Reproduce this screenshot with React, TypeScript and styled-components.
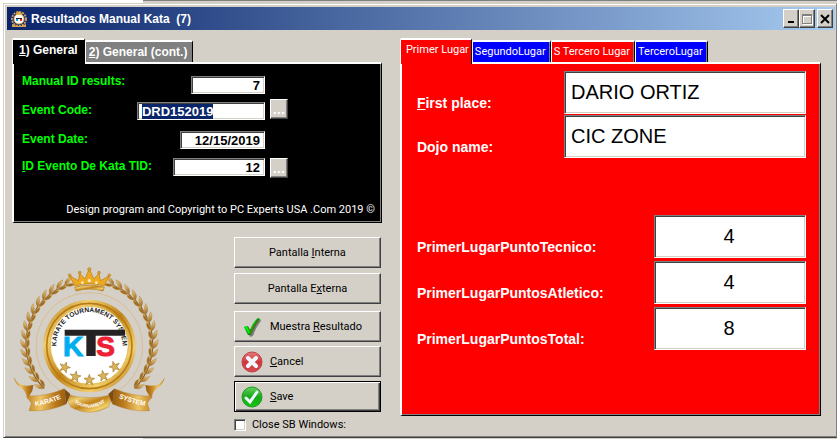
import React, { useEffect, useRef } from "react";
import styled, { createGlobalStyle, css } from "styled-components";

const FACE = "#d4d0c8";
const BOLD_FONT = `"Liberation Sans", Arial, sans-serif`;

const GlobalStyle = createGlobalStyle`
  *, *::before, *::after { box-sizing: border-box; }
  body {
    margin: 0;
    background: ${FACE};
    font-family: Roboto, "Liberation Sans", Arial, sans-serif;
    font-size: 11px;
    line-height: 14px;
    color: #000;
  }
  button, input { font: inherit; color: inherit; margin: 0; border-radius: 0; }
`;

const raised = css`
  border: 1px solid;
  border-color: #fff #404040 #404040 #fff;
  box-shadow: inset -1px -1px 0 #808080;
`;

const Desktop = styled.div`
  min-height: 100vh;
  display: flex;
  padding: 3px 0 1px 3px;
  background:
    linear-gradient(#fff, #fff) 0 0 / 143px 100% no-repeat,
    linear-gradient(#808080, #808080) 143px 0 / 100% 1px no-repeat,
    ${FACE};
`;

const Window = styled.main`
  flex: 1;
  min-width: 0;
  display: flex;
  flex-direction: column;
  padding: 2px 1px 1px 2px;
  background: ${FACE};
  border: 1px solid;
  border-color: ${FACE} #808080 #404040 ${FACE};
  box-shadow: inset 1px 1px 0 #fff, inset 0 -1px 0 #808080;
`;

const TitleBar = styled.header`
  display: flex;
  align-items: center;
  height: 23px;
  margin: 1px 0 0 1px;
  padding: 0 2px 0 4px;
  background: linear-gradient(to right, #0a246a, #a6caf0);
`;

const Title = styled.h1`
  flex: 1;
  margin: 0 0 0 4px;
  font-family: ${BOLD_FONT};
  font-size: 12px;
  font-weight: bold;
  color: #fff;
  white-space: pre;
`;

const CaptionButtons = styled.div`
  display: flex;
`;

const CaptionButton = styled.button<{ $apart?: boolean }>`
  ${raised}
  width: 16px;
  height: 19px;
  padding: 0;
  display: grid;
  place-items: center;
  background: ${FACE};
  margin-left: ${(p) => (p.$apart ? "2px" : "0")};
`;

const Body = styled.div`
  flex: 1;
  display: grid;
  grid-template-columns: 369fr 420fr;
  gap: 18px;
  padding: 8px 14px 0 6px;
`;

const Column = styled.div<{ $inset?: boolean }>`
  display: flex;
  flex-direction: column;
  min-width: 0;
  padding-bottom: ${(p) => (p.$inset ? "20px" : "0")};
`;

const TabStrip = styled.div`
  display: flex;
  align-items: flex-end;
`;

const Tab = styled.button<{ $fill: string; $active?: boolean; $bold?: boolean }>`
  height: ${(p) => (p.$active ? "26px" : "22px")};
  margin-bottom: ${(p) => (p.$active ? "-2px" : "0")};
  padding: ${(p) =>
    p.$active
      ? p.$bold ? "0 6px 5px 6px" : "0 2px 5px 5px"
      : p.$bold ? "0 5px 0 3px" : "0 4px 0 2px"};
  z-index: ${(p) => (p.$active ? 1 : 0)};
  background: ${(p) => p.$fill};
  color: #fff;
  ${(p) => p.$bold && `font-family: ${BOLD_FONT}; font-size: 12px; font-weight: bold;`}
  white-space: nowrap;
  border: solid;
  border-width: 2px 1px 0 1px;
  border-color: #fff #000 #fff #fff;
  border-radius: 2px 2px 0 0;
  ${(p) => !p.$active && "box-shadow: inset -1px 0 0 #808080;"}
`;

const panel = css`
  border: solid;
  border-width: 2px 1px 1px 2px;
  border-color: #fff #000 #000 #fff;
  box-shadow: inset -1px -1px 0 #808080;
`;

const GeneralPanel = styled.section`
  ${panel}
  display: flex;
  flex-direction: column;
  height: 161px;
  padding: 9px 6px 5px 8px;
  background: #000;
`;

const FieldGrid = styled.div`
  display: grid;
  grid-template-columns: 1fr 18px;
  grid-template-rows: 26px 32px 27px 20px;
  column-gap: 5px;
  padding-right: 87px;
`;

const FieldRow = styled.div<{ $stagger?: boolean; $drop?: boolean }>`
  grid-column: 1;
  display: flex;
  justify-content: space-between;
  align-items: ${(p) => (p.$stagger ? "flex-end" : "flex-start")};
  height: ${(p) => (p.$stagger ? "21px" : "auto")};
  padding-top: ${(p) => (p.$drop ? "3px" : "0")};
`;

const FieldLabel = styled.label`
  align-self: flex-start;
  color: #0f0;
  font-family: ${BOLD_FONT};
  font-size: 12px;
  font-weight: bold;
  line-height: 16px;
  white-space: nowrap;
`;

const sunken = css`
  border: 1px solid;
  border-color: #808080 #fff #fff #808080;
  box-shadow: inset 1px 1px 0 #404040, inset -1px -1px 0 ${FACE};
  background: #fff;
  outline: none;
`;

const SmallInput = styled.input<{ $width: number; $left?: boolean }>`
  ${sunken}
  width: ${(p) => p.$width}px;
  height: 18px;
  padding: 0 4px;
  font-family: ${BOLD_FONT};
  font-size: 13px;
  font-weight: bold;
  text-align: ${(p) => (p.$left ? "left" : "right")};
  &::selection { background: #0a246a; color: #fff; }
`;

const LookupButton = styled.button`
  ${raised}
  grid-column: 2;
  width: 18px;
  height: 20px;
  padding: 0;
  background: ${FACE};
  color: #fff;
  font-size: 14px;
  font-weight: bold;
`;

const Copyright = styled.p`
  margin: auto 0 0;
  text-align: right;
  color: #fff;
  white-space: nowrap;
`;

const Lower = styled.div`
  display: flex;
  justify-content: space-between;
  align-items: flex-start;
  padding: 14px 1px 0;
`;

const EmblemBox = styled.div`
  width: 153px;
  padding-top: 28px;
  svg { display: block; width: 100%; }
`;

const Actions = styled.div`
  display: flex;
  flex-direction: column;
  gap: 4px;
  width: 147px;
`;

const ActionGroup = styled.div`
  display: flex;
  flex-direction: column;
  gap: 5px;
  margin-bottom: 3px;
`;

const ActionButton = styled.button<{ $default?: boolean }>`
  ${raised}
  ${(p) => p.$default && "border-color: #000; box-shadow: inset 1px 1px 0 #fff, inset -1px -1px 0 #404040, inset -2px -2px 0 #808080;"}
  height: 31px;
  display: flex;
  align-items: center;
  gap: 6px;
  padding: 0 0 0 6px;
  background: ${FACE};
  svg { flex: none; }
`;

const PlainAction = styled(ActionButton)`
  justify-content: center;
  padding: 0;
`;

const CloseOption = styled.label`
  display: flex;
  align-items: center;
  gap: 6px;
  margin-top: 2px;
`;

const CheckBox = styled.input`
  ${sunken}
  appearance: none;
  width: 12px;
  height: 12px;
`;

const PlacePanel = styled.section`
  ${panel}
  flex: 1;
  display: flex;
  flex-direction: column;
  padding: 7px 14px 0 15px;
  background: #f00;
`;

const PlaceRow = styled.div`
  display: flex;
  justify-content: space-between;
  align-items: center;
  margin-bottom: 1px;
`;

const ScoreGroup = styled.div`
  display: flex;
  flex-direction: column;
  gap: 2px;
  margin-top: 56px;
`;

const PlaceLabel = styled.label`
  padding-top: 20px;
  color: #fff;
  font-family: ${BOLD_FONT};
  font-size: 14px;
  font-weight: bold;
  line-height: 16px;
  white-space: nowrap;
`;

const BigInput = styled.input<{ $score?: boolean }>`
  ${sunken}
  width: ${(p) => (p.$score ? "152px" : "242px")};
  height: 43px;
  padding: ${(p) => (p.$score ? "0 8px 0 6px" : "0 6px")};
  font-family: ${BOLD_FONT};
  font-size: 20px;
  text-align: ${(p) => (p.$score ? "center" : "left")};
`;

const LEAVES = Array.from({ length: 15 }, (_, i) => i);

function Branch() {
  return (
    <g>
      <path d="M205 74 A190 190 0 0 0 135 385" fill="none" stroke="#8a5a18" strokeWidth="4" />
      {LEAVES.map((i) => {
        const deg = 112 + i * 8;
        const rad = (deg * Math.PI) / 180;
        const x = 271 + 190 * Math.cos(rad);
        const y = 250 - 190 * Math.sin(rad);
        return (
          <g key={i} transform={`translate(${x} ${y}) rotate(${90 - deg})`}>
            <path d="M-3 0 Q4 -18 26 -15 Q16 -1 -3 0Z" fill="url(#leaf)" stroke="#a0702a" strokeWidth="1" />
            <path d="M-3 1 Q10 17 27 9 Q15 -2 -3 1Z" fill="#9c6c2a" stroke="#e9c46c" strokeWidth="1" />
          </g>
        );
      })}
    </g>
  );
}

function starPoints(cx: number, cy: number, r: number, turn: number) {
  return Array.from({ length: 10 }, (_, i) => {
    const a = ((i * 36 - 90 + turn) * Math.PI) / 180;
    const d = i % 2 ? r * 0.4 : r;
    return `${cx + d * Math.cos(a)},${cy + d * Math.sin(a)}`;
  }).join(" ");
}

const STARS = [
  [197, 322, 20],
  [229, 350, 10],
  [271, 360, 0],
  [313, 348, -10],
  [347, 320, -20],
];

function RibbonSide() {
  return (
    <g>
      <path d="M45 351 Q58 385 103 375 L100 392 L85 418 Q83 394 64 382 Q47 370 45 351Z" fill="url(#band)" />
      <path d="M82 408 Q140 410 196 386 L202 432 Q145 457 90 452 L97 430Z" fill="url(#band)" stroke="#a8742a" />
      <path d="M196 386 L214 402 L202 432Z" fill="#7b4c13" />
    </g>
  );
}

function Emblem() {
  return (
    <svg viewBox="42 15 459 450" role="img" aria-label="Karate Tournament System">
      <defs>
        <linearGradient id="gold" x1="0" y1="0" x2="1" y2="1">
          <stop offset="0" stopColor="#a8700f" />
          <stop offset="0.25" stopColor="#f0cd70" />
          <stop offset="0.5" stopColor="#c1841a" />
          <stop offset="0.75" stopColor="#f3cf6a" />
          <stop offset="1" stopColor="#a0640c" />
        </linearGradient>
        <linearGradient id="leaf" x1="0" y1="0" x2="1" y2="0">
          <stop offset="0" stopColor="#9a6521" />
          <stop offset="1" stopColor="#f3d384" />
        </linearGradient>
        <linearGradient id="band" x1="0" y1="0" x2="1" y2="0">
          <stop offset="0" stopColor="#c08220" />
          <stop offset="0.35" stopColor="#edc568" />
          <stop offset="0.7" stopColor="#bf7e1e" />
          <stop offset="1" stopColor="#945b10" />
        </linearGradient>
      </defs>
      <Branch />
      <g transform="translate(542 0) scale(-1 1)"><Branch /></g>
      <circle cx="271" cy="258" r="160" fill="none" stroke="#e0b070" strokeWidth="2" />
      <g fill="url(#gold)" stroke="#b8790c" strokeWidth="2">
        <path d="M228 78 L211 47 L238 62 L242 40 L258 57 L271 26 L284 57 L300 40 L304 62 L332 47 L315 78 Q271 64 228 78Z" fill="#edaa20" />
        <path d="M227 82 Q271 69 316 82 L312 93 Q271 81 231 93Z" />
        <circle cx="212" cy="46" r="4" /><circle cx="242" cy="38" r="4" />
        <circle cx="271" cy="28" r="5" /><circle cx="300" cy="38" r="4" /><circle cx="331" cy="46" r="4" />
      </g>
      <g fill="#fff1b7"><circle cx="250" cy="68" r="4" /><circle cx="271" cy="62" r="5" /><circle cx="292" cy="68" r="4" /></g>
      <circle cx="271" cy="258" r="139" fill="url(#gold)" />
      <circle cx="271" cy="258" r="128" fill="none" stroke="#b97c14" strokeWidth="5" />
      <circle cx="271" cy="256" r="117" fill="#fff" stroke="#e6bf58" strokeWidth="3" />
      <path id="motto" d="M174 275 A99 99 0 1 1 368 275" fill="none" />
      <text fontFamily="Liberation Sans, Arial, sans-serif" fontSize="20" fontWeight="bold" fill="#222" textAnchor="middle">
        <textPath href="#motto" startOffset="50%">KARATE TOURNAMENT SYSTEM</textPath>
      </text>
      <g fontFamily="Liberation Sans, Arial, sans-serif" fontSize="84" fontWeight="bold" strokeWidth="3">
        <text x="192" y="288" fill="#00aeef" stroke="#00aeef">K</text>
        <text x="292" y="287" fill="#ed2035" stroke="#ed2035">S</text>
      </g>
      <path d="M197 209 H378 V227 H290 V288 H262 V227 H197Z" fill="#262223" />
      {STARS.map(([x, y, turn]) => (
        <polygon key={x} points={starPoints(x, y, 17, turn)} fill="#d9b35c" stroke="#a37a28" strokeWidth="2" />
      ))}
      <path d="M200 403 Q271 423 344 403 L328 441 Q271 473 215 441Z" fill="url(#gold)" stroke="#a8742a" />
      <RibbonSide />
      <g transform="translate(542 0) scale(-1 1)"><RibbonSide /></g>
      <path id="ribbonLeft" d="M101 439 Q150 434 194 412" fill="none" />
      <path id="ribbonMid" d="M222 425 Q271 461 322 424" fill="none" />
      <path id="ribbonRight" d="M350 410 Q400 432 447 439" fill="none" />
      <g fontFamily="Liberation Sans, Arial, sans-serif" fontWeight="bold" fill="#fff" textAnchor="middle" fontSize="20">
        <text><textPath href="#ribbonLeft" startOffset="50%">KARATE</textPath></text>
        <text fontSize="14"><textPath href="#ribbonMid" startOffset="50%">TOURNAMENT</textPath></text>
        <text><textPath href="#ribbonRight" startOffset="50%">SYSTEM</textPath></text>
      </g>
    </svg>
  );
}

function AppIcon() {
  return (
    <svg width="16" height="16" viewBox="0 0 16 16" aria-hidden="true">
      <circle cx="8" cy="8" r="7" fill="none" stroke="#c5985c" strokeWidth="2" strokeDasharray="2 1" />
      <circle cx="8" cy="8" r="5" fill="#fff" stroke="#d8ad63" />
      <path d="M5 1 L6 3 L8 0 L10 3 L11 1 L11 4 H5Z" fill="#f0b43c" />
      <path d="M5 7 H11 V8 H5Z" fill="#222" />
      <path d="M5 8 H7 V10 H5Z" fill="#00aeef" />
      <path d="M9 8 H11 V10 H9Z" fill="#ed2035" />
      <path d="M1 13 Q8 17 15 13 V16 H1Z" fill="#d9a54a" />
    </svg>
  );
}

function TickIcon() {
  return (
    <svg width="23" height="23" viewBox="0 0 23 23" aria-hidden="true">
      <path d="M5 14 L8 13 L10 17 Q13 9 19 4 L20 6 Q15 12 12 21 L9 22Z" fill="#808080" />
      <path d="M3 12 L7 11 L9 15 Q12 7 17 3 L19 4 Q14 11 10 20 L7 20Z" fill="#0b8a12" />
      <path d="M3 12 L6 11 L9 17 Q12 7 17 3 Q12 10 8 19Z" fill="#00f000" />
      <path d="M9 19 Q12 11 18 5" fill="none" stroke="#986018" strokeWidth="1" />
    </svg>
  );
}

function RoundIcon({ kind }: { kind: "cancel" | "save" }) {
  const cancel = kind === "cancel";
  return (
    <svg width="23" height="23" viewBox="0 0 23 23" aria-hidden="true">
      <defs>
        <linearGradient id={kind} x1="0" y1="0" x2="0" y2="1">
          <stop offset="0" stopColor={cancel ? "#e77a7c" : "#63d25c"} />
          <stop offset="0.5" stopColor={cancel ? "#d0353b" : "#18a818"} />
          <stop offset="1" stopColor={cancel ? "#d94c50" : "#12c812"} />
        </linearGradient>
      </defs>
      <circle cx="11" cy="12" r="10" fill={`url(#${kind})`} stroke={cancel ? "#b8444a" : "#239a23"} />
      {cancel ? (
        <path d="M7 8 L15 16 M15 8 L7 16" stroke="#f2f6ff" strokeWidth="4" strokeLinecap="round" />
      ) : (
        <path d="M5 13 L9 17 L16 7" fill="none" stroke="#f2f8ff" strokeWidth="3" strokeLinecap="round" />
      )}
    </svg>
  );
}

const SCORES = [
  { id: "tecnico", label: "PrimerLugarPuntoTecnico:", value: "4" },
  { id: "atletico", label: "PrimerLugarPuntosAtletico:", value: "4" },
  { id: "total", label: "PrimerLugarPuntosTotal:", value: "8" },
];

export default function App() {
  const codeRef = useRef<HTMLInputElement>(null);
  useEffect(() => {
    codeRef.current?.focus();
    codeRef.current?.select();
  }, []);

  return (
    <>
      <GlobalStyle />
      <Desktop>
        <Window>
          <TitleBar>
            <AppIcon />
            <Title>{"Resultados Manual Kata  (7)"}</Title>
            <CaptionButtons>
              <CaptionButton aria-label="Minimize">
                <svg width="10" height="10"><path d="M2 8 H8" stroke="#000" strokeWidth="2" /></svg>
              </CaptionButton>
              <CaptionButton aria-label="Maximize" disabled>
                <svg width="12" height="12" fill="none" shapeRendering="crispEdges">
                  <path d="M2 3 H11 V11 H2Z" stroke="#fff" />
                  <path d="M1 1 H10 V10 H1Z M1 2 H10" stroke="#808080" />
                </svg>
              </CaptionButton>
              <CaptionButton aria-label="Close" $apart>
                <svg width="10" height="10"><path d="M1 1 L9 9 M9 1 L1 9" stroke="#000" strokeWidth="2" /></svg>
              </CaptionButton>
            </CaptionButtons>
          </TitleBar>
          <Body>
            <Column>
              <TabStrip role="tablist">
                <Tab role="tab" aria-selected="true" $fill="#000" $active $bold><u>1</u>) General</Tab>
                <Tab role="tab" aria-selected="false" $fill="#808080" $bold><u>2</u>) General (cont.)</Tab>
              </TabStrip>
              <GeneralPanel>
                <FieldGrid>
                  <FieldRow $stagger>
                    <FieldLabel htmlFor="results">Manual ID results:</FieldLabel>
                    <SmallInput id="results" $width={74} defaultValue="7" />
                  </FieldRow>
                  <FieldRow $drop>
                    <FieldLabel htmlFor="code">Event Code:</FieldLabel>
                    <SmallInput id="code" ref={codeRef} $width={128} $left defaultValue="DRD152019" />
                  </FieldRow>
                  <LookupButton aria-label="Find event code">...</LookupButton>
                  <FieldRow>
                    <FieldLabel htmlFor="date">Event Date:</FieldLabel>
                    <SmallInput id="date" $width={85} defaultValue="12/15/2019" />
                  </FieldRow>
                  <FieldRow>
                    <FieldLabel htmlFor="tid"><u>I</u>D Evento De Kata TID:</FieldLabel>
                    <SmallInput id="tid" $width={92} defaultValue="12" />
                  </FieldRow>
                  <LookupButton aria-label="Find kata event">...</LookupButton>
                </FieldGrid>
                <Copyright>Design program and Copyright to PC Experts USA .Com 2019 ©</Copyright>
              </GeneralPanel>
              <Lower>
                <EmblemBox><Emblem /></EmblemBox>
                <Actions>
                  <ActionGroup>
                    <PlainAction><span>Pantalla <u>I</u>nterna</span></PlainAction>
                    <PlainAction><span>Pantalla E<u>x</u>terna</span></PlainAction>
                  </ActionGroup>
                  <ActionButton><TickIcon /><span>Muestra <u>R</u>esultado</span></ActionButton>
                  <ActionButton><RoundIcon kind="cancel" /><span><u>C</u>ancel</span></ActionButton>
                  <ActionButton $default><RoundIcon kind="save" /><span><u>S</u>ave</span></ActionButton>
                  <CloseOption><CheckBox type="checkbox" />Close SB Windows:</CloseOption>
                </Actions>
              </Lower>
            </Column>
            <Column $inset>
              <TabStrip role="tablist">
                <Tab role="tab" aria-selected="true" $fill="#f00" $active>Primer Lugar</Tab>
                <Tab role="tab" aria-selected="false" $fill="#00f">SegundoLugar</Tab>
                <Tab role="tab" aria-selected="false" $fill="#f00">S Tercero Lugar</Tab>
                <Tab role="tab" aria-selected="false" $fill="#00f">TerceroLugar</Tab>
              </TabStrip>
              <PlacePanel>
                <PlaceRow>
                  <PlaceLabel htmlFor="first"><u>F</u>irst place:</PlaceLabel>
                  <BigInput id="first" defaultValue="DARIO ORTIZ" />
                </PlaceRow>
                <PlaceRow>
                  <PlaceLabel htmlFor="dojo">Dojo name:</PlaceLabel>
                  <BigInput id="dojo" defaultValue="CIC ZONE" />
                </PlaceRow>
                <ScoreGroup>
                  {SCORES.map((s) => (
                    <PlaceRow key={s.id}>
                      <PlaceLabel htmlFor={s.id}>{s.label}</PlaceLabel>
                      <BigInput id={s.id} $score defaultValue={s.value} />
                    </PlaceRow>
                  ))}
                </ScoreGroup>
              </PlacePanel>
            </Column>
          </Body>
        </Window>
      </Desktop>
    </>
  );
}
